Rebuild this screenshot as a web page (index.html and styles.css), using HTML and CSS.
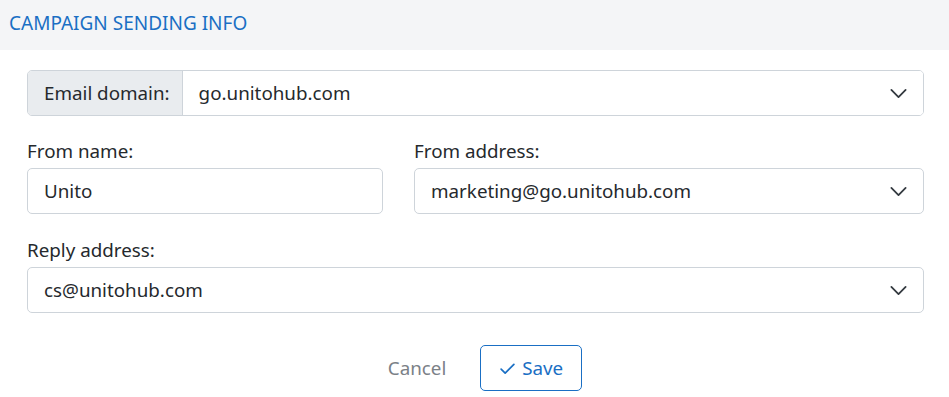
FILE: index.html
```html
<!DOCTYPE html>
<html lang="en">
<head>
    <meta charset="UTF-8">
    <meta name="viewport" content="width=device-width, initial-scale=1.0">
    <title>Campaign Sending Info</title>
    <link rel="stylesheet" href="styles.css">
</head>
<body>
    <div class="panel">
        <div class="panel-header">CAMPAIGN SENDING INFO</div>

        <div class="panel-body">
            <div class="input-group">
                <span class="addon">Email domain:</span>
                <div class="select">
                    <span>go.unitohub.com</span>
                    <svg class="chevron" viewBox="0 0 16 16" width="19" height="19"><path d="m2 5 6 6 6-6" fill="none" stroke="#343a40" stroke-width="1.5" stroke-linecap="round" stroke-linejoin="round"/></svg>
                </div>
            </div>

            <div class="row">
                <div class="form-group col-5">
                    <label>From name:</label>
                    <div class="field">Unito</div>
                </div>
                <div class="form-group col-7">
                    <label>From address:</label>
                    <div class="select">
                        <span>marketing@go.unitohub.com</span>
                        <svg class="chevron" viewBox="0 0 16 16" width="19" height="19"><path d="m2 5 6 6 6-6" fill="none" stroke="#343a40" stroke-width="1.5" stroke-linecap="round" stroke-linejoin="round"/></svg>
                    </div>
                </div>
            </div>

            <div class="form-group">
                <label>Reply address:</label>
                <div class="select">
                    <span>cs@unitohub.com</span>
                    <svg class="chevron" viewBox="0 0 16 16" width="19" height="19"><path d="m2 5 6 6 6-6" fill="none" stroke="#343a40" stroke-width="1.5" stroke-linecap="round" stroke-linejoin="round"/></svg>
                </div>
            </div>

            <div class="actions">
                <button class="btn btn-cancel">Cancel</button>
                <button class="btn btn-save">
                    <svg viewBox="0 0 16 16" width="17" height="17"><path d="M2 8.5 5.8 12.3 14 4.2" fill="none" stroke="#1a6fc4" stroke-width="1.6" stroke-linecap="round" stroke-linejoin="round"/></svg>
                    Save
                </button>
            </div>
        </div>
    </div>
</body>
</html>
```

FILE: styles.css
```css
body {
    margin: 0;
    font-family: "Noto Sans", "Open Sans", sans-serif;
    font-size: 18.8px;
    color: #25292d;
    background-color: white;
}
.panel-header {
    height: 50px;
    line-height: 46px;
    padding-left: 9px;
    background-color: #f4f5f7;
    color: #1a6fc4;
    font-size: 19px;
}
.panel-body {
    padding: 20px 25px 0 27px;
}
.input-group {
    display: flex;
    height: 46px;
    border: 1px solid #ced4da;
    border-radius: 5px;
    box-sizing: border-box;
    margin-bottom: 21px;
    overflow: hidden;
}
.addon {
    display: flex;
    align-items: center;
    padding: 0 12px 0 16px;
    background-color: #e9ecef;
    border-right: 1px solid #ced4da;
}
.input-group .select {
    flex: 1;
    border: none;
    border-radius: 0;
    height: 44px;
}
.row {
    display: flex;
    gap: 31px;
}
.col-5 {
    flex: 0 0 356px;
}
.col-7 {
    flex: 1;
}
.form-group {
    margin-bottom: 22px;
}
label {
    display: block;
    line-height: 28px;
    margin-bottom: 3px;
}
.field,
.select {
    display: flex;
    align-items: center;
    height: 46px;
    padding: 0 16px;
    border: 1px solid #ced4da;
    border-radius: 5px;
    box-sizing: border-box;
    background-color: white;
}
.select {
    justify-content: space-between;
}
.chevron {
    flex: none;
    margin-right: -1px;
}
.actions {
    display: flex;
    justify-content: center;
    gap: 15px;
    padding-top: 10px;
}
.btn {
    display: flex;
    align-items: center;
    gap: 6px;
    height: 46px;
    padding: 0 18px;
    font-family: inherit;
    font-size: 18.8px;
    border-radius: 5px;
    background: none;
    cursor: pointer;
}
.btn-cancel {
    border: 1px solid transparent;
    color: #7b8187;
}
.btn-save {
    border: 1px solid #1a6fc4;
    color: #1a6fc4;
}
```
